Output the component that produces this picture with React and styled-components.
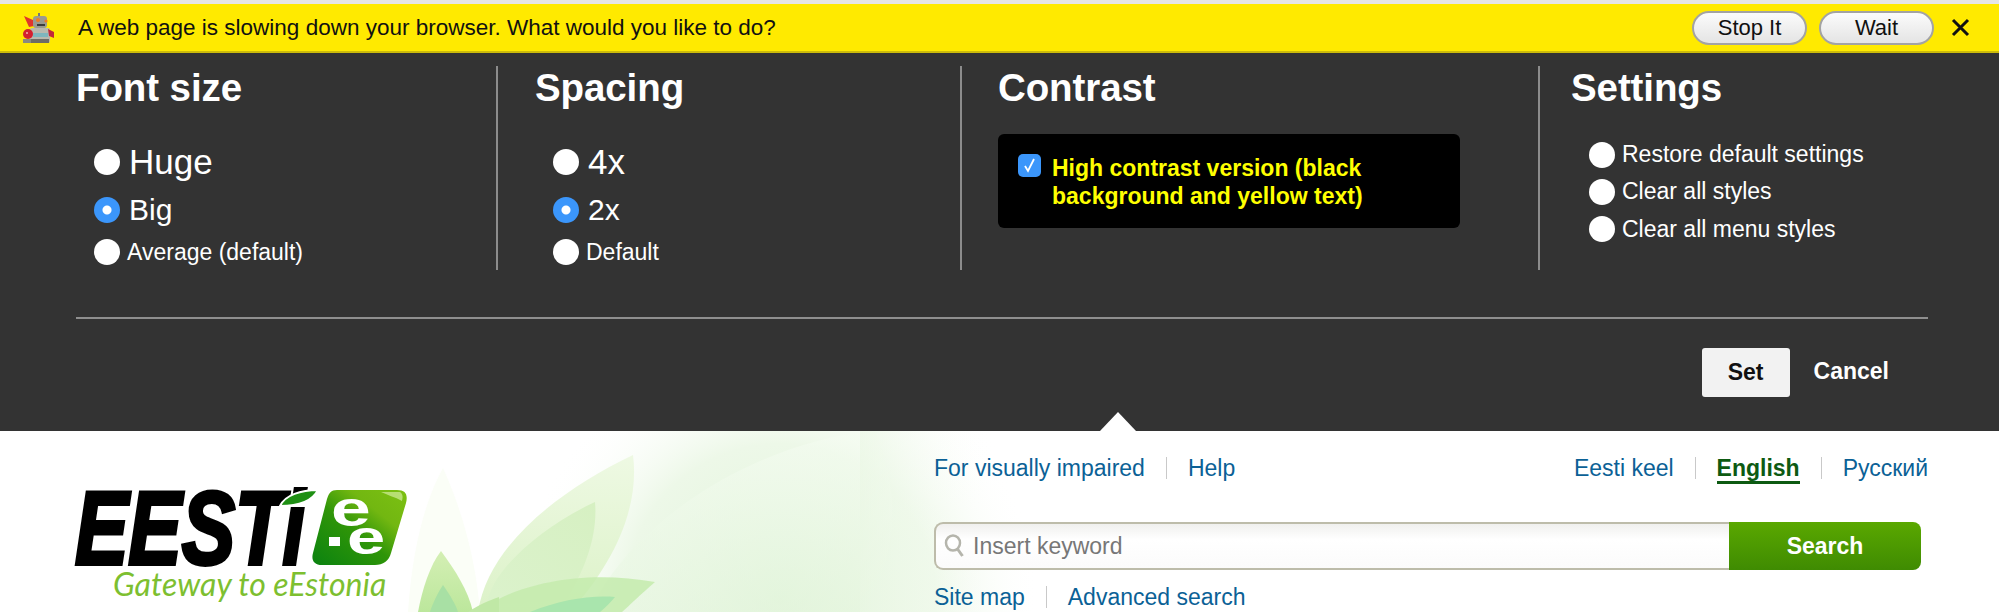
import React from "react";
import styled, { createGlobalStyle } from "styled-components";

const Global = createGlobalStyle`
  html, body { margin: 0; padding: 0; background: #fff; }
  body { font-family: "Liberation Sans", Arial, sans-serif; }
  * { box-sizing: border-box; }
`;

const Page = styled.div`
  width: 1999px;
  height: 612px;
  overflow: hidden;
  display: flex;
  flex-direction: column;
`;

const Bar = styled.div`
  height: 53px;
  flex: none;
  display: flex;
  align-items: center;
  padding: 0 29px 0 23px;
  background: #ffea00;
  border-top: 4px solid #e6e6e6;
  border-bottom: 2px solid #cdbc0a;
  color: #111;
  font-size: 22.5px;
`;

const BarText = styled.span`
  margin-left: 23px;
  flex: 1;
`;

const PillButton = styled.button`
  width: 115px;
  height: 34px;
  margin-right: 12px;
  border: 2px solid #a3a3a3;
  border-radius: 17px;
  background: linear-gradient(#fbfbfb, #e4e4e4);
  color: #111;
  font: 22px "Liberation Sans", Arial, sans-serif;
  padding: 0;
`;

const CloseIcon = styled.svg`
  width: 19px;
  height: 19px;
  margin-left: 5px;
  flex: none;
`;

const Panel = styled.section`
  position: relative;
  height: 378px;
  flex: none;
  background: #333333;
  color: #fff;
  padding: 13px 71px 0 76px;
`;

const Columns = styled.div`
  display: grid;
  grid-template-columns: 420px 464px 578px 1fr;
  height: 203px;
`;

const Column = styled.div`
  padding-left: ${(p) => p.$pad || 0}px;
  border-left: ${(p) => (p.$pad ? "2px solid #8c8c8c" : "none")};
`;

const Heading = styled.h2`
  margin: 0;
  font-size: 38.5px;
  line-height: 44px;
  font-weight: 700;
  letter-spacing: -0.1px;
`;

const Options = styled.div`
  margin-top: ${(p) => p.$top ?? 28}px;
  padding-left: 18px;
`;

const Option = styled.label`
  display: flex;
  align-items: center;
  height: ${(p) => p.$h}px;
  font-size: ${(p) => p.$size}px;
  gap: ${(p) => (p.$size > 25 ? 9 : 7)}px;
`;

const Radio = styled.span`
  width: 26px;
  height: 26px;
  flex: none;
  border-radius: 50%;
  background: ${(p) =>
    p.$on
      ? "radial-gradient(circle, #fff 0 4px, #3b96fb 5px)"
      : "#fff"};
`;

const ContrastBox = styled.label`
  margin-top: 24px;
  width: 462px;
  height: 94px;
  padding: 20px 0 0 20px;
  display: flex;
  gap: 11px;
  background: #000;
  border-radius: 6px;
  color: #ffff00;
  font-size: 23px;
  line-height: 28px;
  font-weight: 700;
`;

const CheckBox = styled.span`
  width: 23px;
  height: 23px;
  flex: none;
  border-radius: 5px;
  background: #3b96fb;
  display: flex;
  align-items: center;
  justify-content: center;
`;

const ContrastText = styled.span`
  width: 330px;
`;

const Rule = styled.hr`
  margin: 48px 0 0;
  border: 0;
  height: 2px;
  background: #8f8f8f;
`;

const Actions = styled.div`
  display: flex;
  align-items: center;
  justify-content: flex-end;
  gap: 24px;
  margin-top: 29px;
  padding-right: 39px;
  font-size: 23px;
  font-weight: 700;
`;

const SetButton = styled.button`
  width: 88px;
  height: 49px;
  border: 0;
  border-radius: 3px;
  background: #f2f2f2;
  color: #111;
  font: 700 23px "Liberation Sans", Arial, sans-serif;
  padding: 0;
`;

const CancelLink = styled.span`
  color: #fff;
  margin-top: -2px;
`;

const Pointer = styled.span`
  position: absolute;
  left: 1100px;
  bottom: 0;
  width: 0;
  height: 0;
  border-left: 18px solid transparent;
  border-right: 18px solid transparent;
  border-bottom: 19px solid #fff;
`;

const Header = styled.header`
  position: relative;
  flex: 1;
  display: flex;
  justify-content: space-between;
  padding: 0 71px 0 75px;
  background: #fff;
  overflow: hidden;
`;

const Leaves = styled.svg`
  position: absolute;
  inset: 0;
  width: 1999px;
  height: 181px;
`;

const LogoBlock = styled.div`
  position: relative;
  width: 333px;
  height: 115px;
  margin-top: 58px;
  flex: none;
`;

const Wordmark = styled.div`
  width: 232px;
  height: 58px;
  margin-bottom: 23px;
  font: italic 700 80px/58px "Liberation Sans", Arial, sans-serif;
  color: #000;
  -webkit-text-stroke: 3px #000;
  transform: translateY(19px) scaleY(1.3);
  transform-origin: 0 56.7px;
  white-space: nowrap;
`;

const Tagline = styled.div`
  margin-left: 38px;
  font: italic 400 32px/28px Lato, "Open Sans", sans-serif;
  color: #7dbf30;
  white-space: nowrap;
`;

const BadgeArt = styled.svg`
  position: absolute;
  left: 0;
  top: 0;
  width: 333px;
  height: 77px;
`;

const BadgeLetter = styled.span`
  position: absolute;
  left: ${(p) => p.$x}px;
  top: ${(p) => p.$y}px;
  font: 700 ${(p) => p.$size}px/28px "Liberation Sans", Arial, sans-serif;
  color: #fff;
  transform: scaleX(1.43);
  transform-origin: 0 50%;
`;

const Tools = styled.div`
  position: relative;
  width: 994px;
  padding-top: 22px;
  font-size: 23px;
`;

const LinkRow = styled.div`
  display: flex;
  justify-content: space-between;
  height: 30px;
  line-height: 30px;
`;

const LinkGroup = styled.nav`
  display: flex;
  align-items: center;
`;

const Link = styled.a`
  color: ${(p) => (p.$active ? "#0d5a12" : "#0b6196")};
  font-weight: ${(p) => (p.$active ? 700 : 400)};
  border-bottom: ${(p) => (p.$active ? "3px solid #0d5a12" : "0")};
  line-height: ${(p) => (p.$active ? "25px" : "30px")};
  margin-top: ${(p) => (p.$active ? "3px" : "0")};
`;

const Sep = styled.span`
  width: 1px;
  height: 22px;
  margin: 0 21px;
  background: #c9c9c9;
`;

const SearchBar = styled.form`
  display: flex;
  width: 987px;
  height: 48px;
  margin: 39px 0 12px;
`;

const SearchField = styled.div`
  flex: 1;
  display: flex;
  align-items: center;
  gap: 8px;
  padding-left: 8px;
  border: 2px solid #bdbcaa;
  border-right: 0;
  border-radius: 9px 0 0 9px;
  background: linear-gradient(#f0f0ee, #fff 35%, #fbfbfb);
`;

const SearchInput = styled.input`
  flex: 1;
  border: 0;
  outline: 0;
  background: transparent;
  padding: 0;
  font: 23px "Liberation Sans", Arial, sans-serif;
  color: #777;
  &::placeholder { color: #777; opacity: 1; }
`;

const SearchButton = styled.button`
  width: 192px;
  flex: none;
  border: 0;
  padding: 0;
  border-radius: 0 8px 8px 0;
  background: linear-gradient(#5aa800, #3f8b02);
  color: #fff;
  font: 700 23px "Liberation Sans", Arial, sans-serif;
`;

const Robot = () => (
  <svg width="32" height="31" viewBox="0 0 32 31" style={{ flex: "none", marginTop: 2 }}>
    <path d="M1 3l9 4 1 6-5 1z" fill="#e0352b" />
    <rect x="15" y="0" width="2" height="4" fill="#777" />
    <rect x="10" y="3" width="14" height="12" rx="3" fill="#9a9a90" />
    <circle cx="15" cy="7" r="2" fill="#ef7b22" />
    <circle cx="23" cy="8" r="1.6" fill="#ef7b22" />
    <rect x="14" y="11" width="8" height="2" fill="#3c3c3c" />
    <rect x="7" y="15" width="20" height="15" rx="2" fill="#b9b9ae" />
    <rect x="10" y="20" width="15" height="4" fill="#7eb6bd" />
    <rect x="8" y="26" width="18" height="4" fill="#6d6d66" />
    <circle cx="5" cy="21" r="5" fill="#d3202f" />
    <circle cx="4" cy="20" r="1" fill="#f4b0b0" />
    <path d="M25 16l6 3v6l-5-2z" fill="#c2283a" />
    <rect x="0" y="26" width="8" height="4" fill="#8a8a80" />
  </svg>
);

const LeafArt = () => (
  <Leaves viewBox="0 0 1999 181">
    <defs>
      <radialGradient id="wash" gradientUnits="userSpaceOnUse" cx="780" cy="600" r="260">
        <stop offset="0" stopColor="#dff3d8" />
        <stop offset="0.6" stopColor="#edf8e8" />
        <stop offset="1" stopColor="#ffffff" stopOpacity="0" />
      </radialGradient>
      <linearGradient id="topLeaf" gradientUnits="userSpaceOnUse" x1="0" y1="431" x2="0" y2="612">
        <stop offset="0" stopColor="#f5fcf2" />
        <stop offset="1" stopColor="#e6f6df" />
      </linearGradient>
      <linearGradient id="leafA" gradientUnits="userSpaceOnUse" x1="0" y1="455" x2="0" y2="612">
        <stop offset="0" stopColor="#eef9e3" />
        <stop offset="1" stopColor="#dcf2c8" />
      </linearGradient>
      <linearGradient id="leafB" gradientUnits="userSpaceOnUse" x1="600" y1="500" x2="500" y2="600">
        <stop offset="0" stopColor="#d6f0c2" />
        <stop offset="1" stopColor="#dbf2cb" />
      </linearGradient>
      <linearGradient id="leafC" gradientUnits="userSpaceOnUse" x1="0" y1="551" x2="0" y2="612">
        <stop offset="0" stopColor="#d4efb4" />
        <stop offset="1" stopColor="#bce79c" />
      </linearGradient>
      <linearGradient id="edgeFade" gradientUnits="userSpaceOnUse" x1="860" y1="0" x2="1000" y2="0">
        <stop offset="0" stopColor="#eaf7e4" stopOpacity="0.6" />
        <stop offset="1" stopColor="#ffffff" stopOpacity="0" />
      </linearGradient>
    </defs>
    <g transform="translate(0 -431)">
      <rect x="520" y="431" width="520" height="181" fill="url(#wash)" />
      <path d="M590 612C630 520 760 440 875 431C900 490 900 560 860 612Z" fill="url(#topLeaf)" opacity="0.55" />
      <rect x="860" y="431" width="140" height="181" fill="url(#edgeFade)" />
      <path d="M408 612C412 550 425 500 443 468C462 510 476 560 480 612Z" fill="#fbfef7" />
      <path d="M478 612C488 545 560 490 633 455C640 510 612 565 570 612Z" fill="url(#leafA)" />
      <path d="M487 605C490 570 545 525 595 502C598 535 585 570 566 600Z" fill="url(#leafB)" />
      <path d="M418 612C422 590 430 565 441 551C455 570 468 590 473 612Z" fill="url(#leafC)" />
      <path d="M430 612C432 605 438 592 443 585C450 595 456 605 458 612Z" fill="#a8e0a4" />
      <path d="M497 600C530 582 590 570 655 582C640 595 630 605 622 612H490Z" fill="#c4ebad" opacity="0.85" />
      <path d="M530 612C560 600 590 595 615 597C610 603 605 608 600 612Z" fill="#a9e5ad" />
      <path d="M468 612C478 605 490 600 499 597L499 612Z" fill="#c0e8a6" />
    </g>
  </Leaves>
);

const BrandMark = () => (
  <LogoBlock>
    <Wordmark>EESTi</Wordmark>
    <Tagline>Gateway to eEstonia</Tagline>
    <BadgeArt viewBox="0 0 333 77">
      <defs>
        <linearGradient id="badge" x1="0" y1="1" x2="1" y2="0">
          <stop offset="0" stopColor="#0a8210" />
          <stop offset="0.45" stopColor="#2f9508" />
          <stop offset="0.7" stopColor="#72b711" />
          <stop offset="1" stopColor="#7cc012" />
        </linearGradient>
      </defs>
      <path d="M205 17C210 6 226 1 243 1C238 11 226 17 205 17Z" fill="#1f8f14" stroke="#fff" strokeWidth="2" />
      <path
        d="M262 1H322C331 1 333 6 331 14L316 64C314 72 308 76 300 76H247C239 76 236 71 238 64L252 10C254 4 256 1 262 1Z"
        fill="url(#badge)"
      />
      <path d="M306 3H325C328 5 328 8 327 12C320 8 312 6 306 3Z" fill="#d2ec9c" opacity="0.7" />
      <rect x="254" y="48" width="11" height="9" fill="#fff" />
    </BadgeArt>
    <BadgeLetter $x={256} $y={6} $size={50}>e</BadgeLetter>
    <BadgeLetter $x={272} $y={35} $size={48}>e</BadgeLetter>
  </LogoBlock>
);

const RadioOption = ({ h, size, on, children }) => (
  <Option $h={h} $size={size}>
    <Radio $on={on} />
    {children}
  </Option>
);

export default function App() {
  return (
    <Page>
      <Global />
      <Bar>
        <Robot />
        <BarText>A web page is slowing down your browser. What would you like to do?</BarText>
        <PillButton>Stop It</PillButton>
        <PillButton>Wait</PillButton>
        <CloseIcon viewBox="0 0 19 19">
          <path d="M2 2l15 15M17 2L2 17" stroke="#111" strokeWidth="3" fill="none" />
        </CloseIcon>
      </Bar>
      <Panel>
        <Columns>
          <Column>
            <Heading>Font size</Heading>
            <Options>
              <RadioOption h={48} size={35}>Huge</RadioOption>
              <RadioOption h={48} size={30} on>Big</RadioOption>
              <RadioOption h={36} size={23}>Average (default)</RadioOption>
            </Options>
          </Column>
          <Column $pad={37}>
            <Heading>Spacing</Heading>
            <Options>
              <RadioOption h={48} size={35}>4x</RadioOption>
              <RadioOption h={48} size={30} on>2x</RadioOption>
              <RadioOption h={36} size={23}>Default</RadioOption>
            </Options>
          </Column>
          <Column $pad={36}>
            <Heading>Contrast</Heading>
            <ContrastBox>
              <CheckBox>
                <svg width="13" height="15" viewBox="0 0 13 15">
                  <path d="M2 8l3 5 6-12" stroke="#fff" strokeWidth="1.8" fill="none" />
                </svg>
              </CheckBox>
              <ContrastText>High contrast version (black background and yellow text)</ContrastText>
            </ContrastBox>
          </Column>
          <Column $pad={31}>
            <Heading>Settings</Heading>
            <Options $top={26}>
              <RadioOption h={37} size={23}>Restore default settings</RadioOption>
              <RadioOption h={37} size={23}>Clear all styles</RadioOption>
              <RadioOption h={38} size={23}>Clear all menu styles</RadioOption>
            </Options>
          </Column>
        </Columns>
        <Rule />
        <Actions>
          <SetButton>Set</SetButton>
          <CancelLink>Cancel</CancelLink>
        </Actions>
        <Pointer />
      </Panel>
      <Header>
        <LeafArt />
        <BrandMark />
        <Tools>
          <LinkRow>
            <LinkGroup>
              <Link>For visually impaired</Link>
              <Sep />
              <Link>Help</Link>
            </LinkGroup>
            <LinkGroup>
              <Link>Eesti keel</Link>
              <Sep />
              <Link $active>English</Link>
              <Sep />
              <Link>Русский</Link>
            </LinkGroup>
          </LinkRow>
          <SearchBar>
            <SearchField>
              <svg width="21" height="24" viewBox="0 0 21 24" style={{ flex: "none" }}>
                <ellipse cx="9" cy="9" rx="7" ry="7.5" fill="none" stroke="#b5b5ac" strokeWidth="2.5" />
                <path d="M13.5 15l5 7" stroke="#b5b5ac" strokeWidth="3" />
              </svg>
              <SearchInput placeholder="Insert keyword" />
            </SearchField>
            <SearchButton type="button">Search</SearchButton>
          </SearchBar>
          <LinkGroup>
            <Link>Site map</Link>
            <Sep />
            <Link>Advanced search</Link>
          </LinkGroup>
        </Tools>
      </Header>
    </Page>
  );
}
